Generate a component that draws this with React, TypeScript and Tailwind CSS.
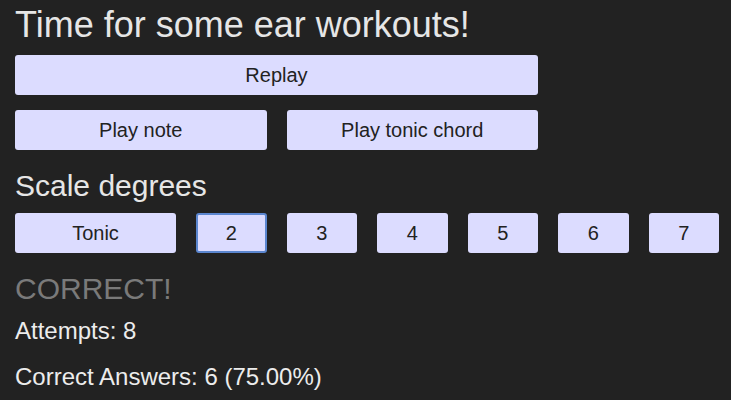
import { useState } from 'react'

const degrees = ['2', '3', '4', '5', '6', '7']

const btn =
  'h-10 rounded-[3px] bg-[#dcdcff] text-[20px] text-[#222] flex items-center justify-center'

const App = () => {
  const [selected, setSelected] = useState('2')

  return (
    <div
      className="min-h-[400px] bg-[#222222] px-[15px] text-[#ececec]"
      style={{ fontFamily: '"Liberation Sans", Arial, sans-serif' }}
    >
      <div className="pt-[5px] text-[36px] leading-[40px] text-[#e6e6e6]">
        Time for some ear workouts!
      </div>

      <div className="mt-[10px] grid w-[704px] grid-cols-8 gap-x-5 gap-y-[15px]">
        <button className={`${btn} col-span-6`}>Replay</button>
        <div className="col-span-2" />
        <button className={`${btn} col-span-3`}>Play note</button>
        <button className={`${btn} col-span-3`}>Play tonic chord</button>
      </div>

      <div className="mt-[19px] text-[30px] leading-[34px] text-[#e6e6e6]">Scale degrees</div>

      <div className="mt-[10px] grid w-[704px] grid-cols-8 gap-x-5">
        <button className={`${btn} col-span-2`} onClick={() => setSelected('tonic')}>
          Tonic
        </button>
        {degrees.map((d) => (
          <button
            key={d}
            onClick={() => setSelected(d)}
            className={`${btn} ${selected === d ? 'border-2 border-[#5b86cf]' : ''}`}
          >
            {d}
          </button>
        ))}
      </div>

      <div className="mt-[18px] text-[30px] leading-[36px] text-[#7a7a7a]">CORRECT!</div>
      <div className="mt-[9px] text-[24px] leading-[30px]">Attempts: 8</div>
      <div className="mt-[16px] text-[24px] leading-[30px]">Correct Answers: 6 (75.00%)</div>
    </div>
  )
}

export default App
